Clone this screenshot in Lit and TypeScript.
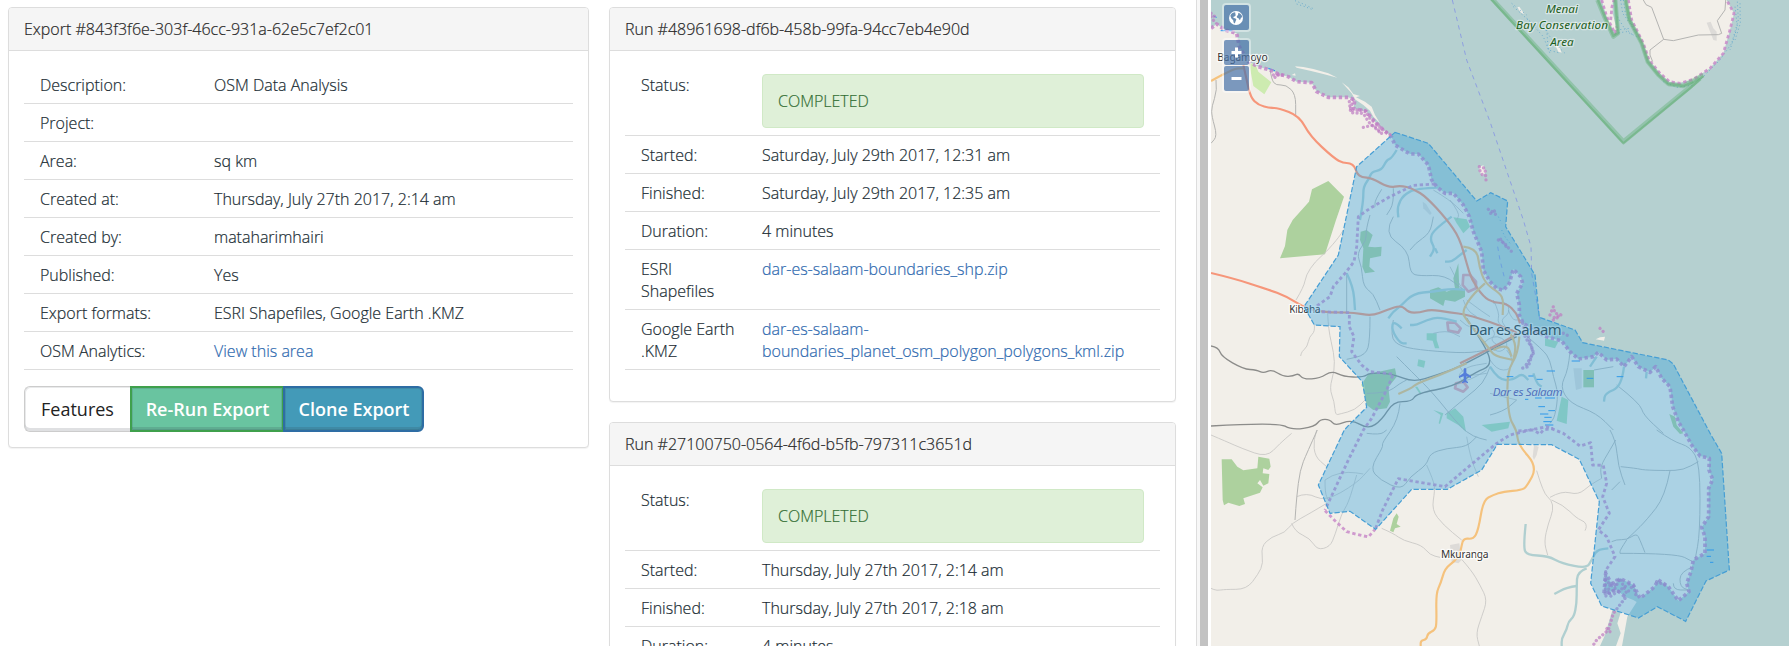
import { LitElement, html, svg, css } from "lit";
import { customElement, property } from "lit/decorators.js";

type Row = { label: string; value?: string; href?: boolean; status?: boolean };

@customElement("info-panel")
export class InfoPanel extends LitElement {
  @property() heading = "";
  @property({ attribute: false }) rows: Row[] = [];
  @property({ type: Number }) labelWidth = 174;
  static styles = css`
    :host { display: block; background: #fff; border: 1px solid #ddd; border-radius: 4px; box-shadow: 0 1px 1px rgba(0,0,0,.05); box-sizing: border-box; }
    .head { height: 43px; box-sizing: border-box; border-bottom: 1px solid #ddd; background: #f5f5f5; color: #222; padding: 10px 15px 0; border-radius: 3px 3px 0 0; line-height: 22px; -webkit-text-stroke: .2px #333; }
    .body { padding: 15px; }
    .row { display: grid; border-bottom: 1px solid #ddd; padding: 8px 16px 7px; line-height: 22px; color: #14262e; -webkit-text-stroke: .2px #2a3a40; }
    .label { padding-right: 16px; }
    a { color: #2563ac; text-decoration: none; -webkit-text-stroke-color: #3d73b4; }
    .alert { height: 54px; box-sizing: border-box; border: 1px solid #d0e9c6; border-radius: 4px; background: #dff0d8; color: #2f6a30; padding: 15px 15px 0; -webkit-text-stroke-color: #3c763d; }
  `;
  render() {
    return html`
      <div class="head">${this.heading}</div>
      <div class="body">
        ${this.rows.map((r) => html`<div class="row" style="grid-template-columns:${this.labelWidth}px 1fr">
          <div class="label">${r.label}</div>
          ${r.status ? html`<div class="alert">${r.value}</div>` : html`<div>${r.href ? html`<a>${r.value}</a>` : r.value}</div>`}
        </div>`)}
        <slot></slot>
      </div>`;
  }
}

const COAST = "33,85 50,72 75,90 110,100 118,140 145,185 175,200 210,210 235,222 265,230 290,245 335,248 350,275 385,292 445,292 465,300 460,325 500,335 515,355 545,385 575,412 585,435 630,462 655,462 685,495 695,540 710,560 735,580 760,580 790,615 808,650 820,695 845,755 850,810 870,845 890,865 910,871 928,850 940,808 962,830 968,850 950,880 958,915 958,945 970,970 1000,990 1040,1010 1085,1023 1110,1055 1135,1077 1180,1070 1195,1057 1220,1080 1250,1077 1272,1100 1295,1070 1315,1100 1350,1117 1367,1100 1385,1135 1410,1160 1418,1220 1435,1265 1450,1290 1475,1335 1500,1368 1528,1375 1527,1410 1538,1438 1526,1465 1526,1550 1505,1582 1515,1610 1515,1660 1480,1680 1473,1715 1460,1750 1467,1775 1435,1802 1405,1760 1375,1740 1362,1762 1320,1795 1300,1755 1260,1735 1240,1760 1217,1720 1212,1780 1250,1770 1275,1790";
const AREA = "585,397 685,430 830,603 872,578 923,603 917,680 1005,825 1018,952 1125,990 1148,1028 1405,1080 1420,1092 1533,1305 1565,1360 1588,1710 1518,1743 1457,1864 1372,1820 1315,1854 1205,1818 1172,1750 1198,1505 1138,1378 1055,1334 892,1333 845,1410 742,1468 635,1468 527,1588 450,1534 390,1540 355,1455 433,1290 445,1277 500,1222 487,1145 418,1070 420,980 343,975 312,920 415,765 440,645 470,500";

/** Turns a point list into a path that bends through the middle of each segment. */
const smooth = (points: string): string => {
  const p = points.split(" ").map((s) => s.split(",").map(Number));
  let d = `M${p[0][0]} ${p[0][1]}`;
  for (let i = 1; i < p.length - 1; i++) {
    d += `Q${p[i][0]} ${p[i][1]} ${(p[i][0] + p[i + 1][0]) / 2} ${(p[i][1] + p[i + 1][1]) / 2}`;
  }
  const last = p[p.length - 1];
  return `${d}L${last[0]} ${last[1]}`;
};
const curves = (cls: string, list: string[]) => list.map((p) => svg`<path class="line ${cls}" d=${smooth(p)}></path>`);
const lines = (cls: string, list: string[]) => list.map((p) => svg`<polyline class="line ${cls}" points=${p}></polyline>`);
const fills = (cls: string, list: string[]) => list.map((p) => svg`<polygon class=${cls} points=${p}></polygon>`);

@customElement("export-map")
export class ExportMap extends LitElement {
  static styles = css`
    :host { display: block; position: relative; overflow: hidden; font-weight: 400; }
    .map { display: block; width: 578px; height: 646px; }
    .line { fill: none; stroke-linejoin: round; }
    .sea { fill: #b5d0d0; }
    .land { fill: #f2efe9; }
    .wood { fill: #add19e; }
    .park { fill: #cdebb0; }
    .green { fill: #9bd8ac; opacity: .8; }
    .urban { fill: #dddbd8; }
    .base { fill: #f3dcdc; fill-opacity: .6; stroke: #e48e9d; stroke-width: 8; stroke-opacity: .75; stroke-linejoin: round; }
    .minor { stroke: #c8c7c5; stroke-width: 2.6; }
    .grey { stroke: #b4b4b2; stroke-width: 3; }
    .inner { stroke: #b0b3b3; stroke-width: 2.6; }
    .street { stroke: #b9b9b9; stroke-width: 2.2; }
    .rail { stroke: #8c8c8a; stroke-width: 4; }
    .trunk { stroke: #f6967a; stroke-width: 6.5; }
    .primary { stroke: #f5c27d; stroke-width: 6.5; }
    .river { stroke: #b0cfd0; stroke-width: 7; }
    .admin { stroke: #c98bc9; stroke-width: 8.5; stroke-dasharray: 10 8; opacity: .85; }
    .coast { stroke: #c180c6; stroke-width: 11; stroke-dasharray: 10 8; opacity: .8; }
    .dense { stroke: #bd7cc2; stroke-width: 10; stroke-dasharray: .1 13; stroke-linecap: round; opacity: .7; }
    .reserve { stroke: #5fae72; stroke-width: 13; opacity: .4; }
    .reserve-edge { stroke: #5fae72; stroke-width: 7; opacity: .5; }
    .ferry { stroke: #8e9fe0; stroke-width: 3; stroke-dasharray: 13 13; }
    .marsh { stroke: #2a93f0; stroke-width: 3; }
    .reef { stroke: #5aa2cc; stroke-width: 3; stroke-dasharray: 3 8; opacity: .8; }
    .area { fill: rgba(55,163,222,.38); stroke: #469ed4; stroke-width: 3.6; stroke-dasharray: 16 6; }
    text { font-family: "Noto Sans", sans-serif; fill: #333; paint-order: stroke; stroke: rgba(255,255,255,.75); stroke-width: 8px; stroke-linejoin: round; }
    .menai { fill: #1d601d; font-style: italic; text-anchor: middle; font-size: 35px; stroke: rgba(255,255,255,.45); }
    .town { font-size: 31px; }
    .city { font-size: 44.5px; stroke: rgba(255,255,255,.45); }
    .region { font-size: 35px; font-style: italic; fill: #6652a5; stroke-width: 4px; stroke: rgba(255,255,255,.4); }
    .controls { position: absolute; left: 11px; top: 3px; display: flex; flex-direction: column; gap: 6px; }
    .group { display: flex; flex-direction: column; gap: 1px; padding: 2px; background: rgba(255,255,255,.4); border-radius: 4px; }
    .btn { display: block; width: 25px; height: 25px; background: rgba(0,60,136,.5); border-radius: 2px; }
    .btn svg { display: block; }
  `;
  render() {
    return html`
      <svg class="map" viewBox="33 0 1734 1938" preserveAspectRatio="none">
        <rect class="land" x="33" y="0" width="1734" height="1938"></rect>
        <polygon class="sea" points="33,0 ${COAST} 1300,1800 1310,1806 1282,1850 1266,1938 1767,1938 1767,0"></polygon>
        <polygon class="sea" points="1238,1828 1262,1838 1252,1870 1262,1900 1248,1938 1200,1938 1215,1905"></polygon>
        ${fills("land", [
          "1280,0 1295,60 1330,130 1347,180 1380,220 1408,245 1440,248 1480,238 1530,205 1570,160 1590,90 1602,40 1580,0",
          "1205,0 1220,50 1245,100 1252,95 1238,40 1238,0",
          "285,199 310,201 340,207 385,220 412,233 370,222 330,212 290,203",
          "425,247 445,262 460,282 480,288 468,292 495,305 515,320 525,345 540,370 520,350 510,332 490,315 465,298 455,280",
          "950,22 958,20 973,42 965,40", "1063,130 1078,140 1085,158 1075,155", "1187,1018 1200,1012 1215,1010 1212,1022",
          "838,500 850,496 858,515 848,528 838,515", "275,225 285,220 287,227",
        ])}
        ${lines("reef", ["285,2 310,12 338,25", "290,12 315,20 335,28", "935,10 960,30 980,45", "940,20 985,60 1030,110 1050,160", "980,55 1010,80", "1030,80 1060,125 1095,160", "1040,90 1045,150 1075,158", "1245,100 1280,95 1310,110", "1250,90 1290,85", "1262,0 1268,40 1290,70 1310,100", "1270,0 1276,40 1296,75", "1252,50 1270,80 1298,105", "1612,5 1615,60 1595,130 1560,180 1500,240", "1605,20 1612,80 1590,150", "1620,10 1621,70 1605,120", "1390,245 1430,262 1480,255", "905,690 915,710 930,730", "895,650 905,670"])}
        ${fills("wood", [
          "278,660 327,605 336,568 385,543 432,590 408,660 375,763 240,775 255,738 262,690",
          "65,1378 95,1378 112,1400 130,1411 172,1405 175,1370 208,1376 212,1400 205,1410 190,1405 188,1420 208,1422 205,1450 190,1457 180,1440 172,1450 188,1462 180,1478 130,1495 135,1512 118,1518 85,1508 72,1516 68,1500",
          "590,1540 580,1555 570,1592 580,1597 585,1585 602,1580 590,1572 596,1550",
          "487,1150 505,1122 585,1105 590,1130 565,1162 570,1205 560,1225 520,1230 500,1215",
          "482,695 500,690 518,705 505,740 525,742 545,740 543,768 510,775 508,800 525,815 495,820 487,800 490,745 480,720",
          "690,870 715,862 740,875 765,865 760,835 775,790 778,870 795,870 795,890 765,905 735,900 730,918 690,895",
          "1150,1110 1182,1110 1182,1162 1150,1162",
          "1408,1242 1425,1250 1430,1275 1450,1300 1440,1302 1420,1280",
        ])}
        ${fills("park", ["148,192 165,190 175,215 214,247 193,283 160,258", "483,1155 490,1142 496,1172"])}
        ${fills("green", ["680,1000 710,1000 710,1020 718,1045 705,1045 698,1022 680,1020", "655,1078 676,1083 672,1103 652,1098", "740,1240 765,1225 790,1250 798,1295 775,1275 740,1255", "845,1275 890,1270 930,1265 925,1285 875,1295", "1085,1190 1105,1200 1100,1272 1070,1262", "760,652 800,658 810,680 790,700 770,670", "1035,1015 1075,1025 1065,1045 1035,1037", "645,1160 652,1160 664,1180 658,1180", "700,1230 730,1240 720,1272 716,1270 722,1245"])}
        ${fills("urban", ["750,1635 778,1630 782,1660 785,1680 775,1690 755,1685", "1520,68 1532,65 1540,85 1550,95 1550,122 1540,120", "1120,1105 1145,1105 1145,1165 1128,1170", "1002,1336 1016,1340 1010,1365 1002,1380 998,1370", "668,605 678,612 695,640 690,645 670,625"])}
        ${fills("base", ["790,825 810,825 828,845 828,865 805,875 788,855", "742,968 765,968 782,985 775,998 745,992", "768,1150 790,1145 803,1162 790,1175 765,1165"])}
        ${curves("minor", [
          "288,900 312,860 318,825 345,785 380,755 418,710 430,690", "343,975 345,995 328,1010 322,1040 305,1055 302,1068",
          "383,940 385,990 402,1060 404,1110 388,1165 403,1205 406,1245 420,1242 465,1230 495,1200",
          "33,1305 80,1325 125,1345 200,1372 240,1330 275,1300", "350,1290 340,1320 345,1370 380,1400", "380,1510 330,1540 275,1570 255,1598 215,1610 183,1640 190,1690 175,1722 140,1768 75,1768 50,1772 33,1765",
          "290,1490 320,1477 375,1505 470,1450 510,1405", "275,1570 285,1595 330,1615 352,1650 390,1640 405,1605 425,1540 445,1510 470,1425", "375,1440 395,1425 445,1415 490,1422", "375,1440 375,1480 385,1500", "545,1585 580,1600 610,1622 665,1635 690,1665 720,1672",
          "680,1395 700,1440 705,1470 695,1530 730,1575 785,1620", "785,1678 815,1712 840,1755 862,1800 845,1850 828,1900 838,1938", "800,1310 810,1370 835,1430",
          "1010,1412 1030,1480 1055,1500 1060,1530 1045,1570 1032,1625 1043,1665", "1050,1492 1085,1472 1135,1485 1170,1455 1205,1435", "1055,1500 1090,1515 1130,1555 1155,1565 1160,1580 1155,1592",
        ])}
        ${curves("grey", [
          "210,208 215,240 228,256 258,254 287,282 287,345", "48,240 52,270 35,320 35,348 52,408 33,430", "352,1290 320,1360 300,1410 290,1490 285,1560",
        ])}
        ${lines("grey", ["1330,0 1338,14 1355,22 1391,118 1420,122 1495,105 1555,104 1565,100 1552,62 1575,30 1577,0", "1391,118 1350,150 1350,165 1358,185"])}
        ${curves("inner", [
          "545,568 525,600 525,620", "510,645 497,690 500,720 470,760 485,800 490,860 520,880 540,930", "580,650 550,700 625,750 630,820 660,828 735,825 790,870", "630,750 645,730 690,700 700,650", "580,565 582,610 560,645",
          "440,820 440,940", "510,950 510,1020 498,1065 440,1078", "580,960 570,1010 600,1040 680,1052 800,1060 860,1050", "590,1070 640,1120 700,1180 780,1280 820,1310 860,1320", "500,1180 560,1180 600,1150 620,1140", "735,1245 800,1190 850,1150 870,1100", "600,1210 595,1260 545,1330 550,1340 510,1405 540,1440 605,1470 630,1430 680,1395 690,1360 740,1345 800,1340 830,1310", "500,1300 540,1305 560,1290", "870,1245 910,1235 950,1200",
          "970,1000 1030,1050 1050,1080 1060,1130 1075,1180 1065,1250 1050,1270", "1110,1055 1105,1110 1080,1160 1110,1210 1190,1240 1240,1290", "1182,1110 1240,1100", "1250,1155 1320,1210 1330,1245 1390,1300",
          "1230,1290 1247,1320 1255,1400 1275,1455", "1247,1320 1230,1350 1200,1400 1205,1435", "1262,1400 1310,1405 1330,1410 1400,1412 1450,1410 1495,1385", "1370,1290 1420,1325 1470,1340 1500,1390 1500,1600 1485,1680", "1410,1412 1395,1490 1340,1560 1300,1600 1280,1618", "1235,1625 1250,1618 1280,1620 1310,1600 1320,1620 1335,1658", "1280,1620 1260,1650 1260,1660", "1260,1660 1430,1660 1478,1685", "1260,1445 1235,1470", "1480,1700 1440,1715 1440,1760 1465,1770", "1420,1750 1420,1770 1465,1770",
        ])}
        ${curves("street", [
          "880,900 900,940 890,970 940,1000", "880,910 920,900 930,940 900,960 925,990", "870,1080 890,1110 930,1110 940,1080 920,1050", "850,1030 880,1000 930,1030 900,1060 870,1040", "750,600 780,640 770,660", "860,1110 800,1150 770,1130 800,1100 860,1090", "800,900 840,930 870,950", "750,800 770,840 790,870", "790,900 800,930 830,950", "925,930 935,960 960,960", "870,1180 910,1190 950,1200", "700,570 750,600 790,640", "700,1000 740,990 780,1010", "780,960 800,980 830,985 850,1000", "870,980 890,1000 870,1020 900,1040", "780,1100 790,1130 860,1120",
        ])}
        ${curves("river", ["977,1572 970,1640 980,1665 1045,1668 1085,1690 1160,1705 1175,1680 1190,1650 1225,1645", "1160,1705 1132,1715 1130,1760 1130,1810 1122,1850 1105,1865 1100,1890 1085,1915 1085,1938", "1130,1758 1100,1762 1063,1782"])}
        ${curves("river", ["590,450 575,475 560,480 545,510 515,515 508,535 490,560 490,600 480,660", "715,563 650,565 610,585 592,620 595,652", "755,650 700,690 690,720 705,745 690,770", "705,745 712,760", "800,750 780,765 755,785 735,785", "795,870 760,865 700,875 640,880 600,920 580,935 565,955", "770,965 720,950 680,960 650,975 630,975", "440,820 460,860 465,930", "605,985 580,960 575,990 600,1030 620,1030", "1272,1100 1265,1160 1215,1180 1212,1205", "1190,1070 1170,1100", "1000,1120 1010,1150 1025,1160", "870,1100 895,1140 940,1140 965,1120 985,1140", "1340,1115 1338,1135"])}
        ${curves("rail", ["33,1038 55,1042 65,1070 130,1107 170,1110 190,1120 215,1108 250,1130 280,1128 295,1120 310,1138 360,1135 395,1112 430,1130 490,1132 510,1118 580,1122 640,1147 710,1125 780,1100 900,1035 950,1010", "33,1278 235,1267 275,1290 345,1280 360,1258 390,1258 405,1278 455,1258 505,1288 545,1260 580,1205 635,1205 650,1180 760,1160 830,1115 870,1100 868,1060 800,955"])}
        ${curves("trunk", ["130,195 140,240 152,292 175,315 210,324 235,324 298,348 330,408 402,475 430,489 450,489 465,500 470,520 485,532 515,534 568,564 600,556 640,566 680,592 740,658 778,712 800,790 815,840 850,890 880,908 920,910 950,940 960,970", "33,819 100,835 200,867 262,890 325,930 400,938 460,937 515,948 560,930 605,915 625,938 660,938 690,928 750,937 800,944 870,965 930,990 960,1000 860,1050 780,1090"])}
        ${curves("primary", ["33,243 100,205 130,205", "790,740 830,745 838,800 855,850 900,880 910,900 908,945", "855,850 820,880 785,935 800,960 870,1050 885,1068 940,1080", "595,1182 635,1165 650,1150 720,1125 800,1090", "958,1010 955,1060 920,1115 925,1250 950,1290 955,1335 1012,1400 980,1460 965,1470 910,1475 880,1485 850,1500 835,1590 820,1618 788,1614 783,1655 765,1683 735,1705 722,1750 708,1780 710,1870 705,1890 683,1900 680,1918 662,1922 662,1938", "930,1000 950,1030 940,1080", "880,1050 920,1030 935,1070"])}
        ${lines("ferry", ["757,0 800,180 870,365 970,660 993,740 995,820 1020,960", "893,740 900,780 915,840"])}
        ${lines("marsh", ["62,92 98,92", "1000,985 985,990", "1040,1113 1065,1113", "985,1128 1000,1128", "1010,1138 1028,1138", "1005,1194 1025,1194", "1035,1194 1065,1194", "1015,1220 1035,1220", "1045,1232 1065,1232", "1020,1242 1045,1242", "1033,1252 1055,1252", "1030,1265 1055,1265", "1035,1275 1060,1275", "1250,1130 1270,1130", "1115,1083 1140,1083", "1520,1650 1542,1650", "1520,1669 1533,1669", "1530,1687 1540,1687", "975,1198 985,1198", "1160,1135 1180,1135", "920,1130 940,1130", "205,205 225,212", "40,48 50,52"])}
        ${lines("coast", [COAST])}
        ${lines("admin", ["705,552 640,556 570,590 510,625 475,650 470,740 462,785 435,820 400,860 390,890 350,918 360,935 448,938 448,980 462,1010 455,1055 485,1095 510,1115 580,1122 560,1170 515,1255 490,1290 445,1380 375,1530", "527,1585 548,1530 595,1436 735,1460 800,1405 890,1330 930,1305 990,1290 1040,1280 1090,1300 1140,1338 1172,1328 1178,1395 1210,1396 1220,1450 1208,1490 1228,1540 1195,1590 1220,1610 1245,1670 1218,1710", "1285,0 1295,60 1330,130 1347,180 1380,220 1408,245 1440,250 1480,238 1530,205 1570,160 1590,90 1602,40 1580,0", "1205,0 1220,50 1245,100 1250,80", "1232,60 1236,20 1242,0", "955,1293 1000,1290 1020,1302 1030,1290 1060,1285"])}
        ${lines("admin", ["375,1532 405,1562 440,1595 470,1603 505,1611 525,1588"])}
        ${lines("dense", ["33,40 50,55", "33,50 45,68", "220,225 250,225", "225,232 245,218", "460,300 450,330 495,330 510,355 550,390 572,405", "448,305 452,338 490,340 505,365 545,402", "490,382 520,375 545,400", "838,500 855,505 858,540", "840,512 850,530", "968,970 975,1010 1000,1050 985,1100 965,1105", "985,1010 1000,1060 975,1100", "1050,945 1060,920 1065,940 1085,945 1055,955", "1060,960 1080,948", "1200,985 1215,1000", "1090,1000 1110,1010", "1217,1715 1215,1790 1240,1770", "1215,1740 1245,1765 1260,1735 1280,1780 1300,1755 1310,1795", "1250,1740 1225,1760 1230,1790 1290,1750", "1370,1745 1395,1755", "1275,1795 1240,1840 1225,1890 1190,1920 1180,1935", "1230,1895 1215,1880", "895,720 912,728 935,755", "902,718 920,742", "872,640 885,632", "865,628 885,640 890,650"])}
        ${lines("reserve", ["875,-5 1270,424 1500,236", "1277,0 1288,60 1325,130 1343,185 1375,225 1405,252 1450,258 1510,225", "1192,0 1215,55 1240,110 1254,100 1246,0"])}
        ${lines("reserve-edge", ["873,-3 1270,430 1470,265 1510,228", "1277,0 1288,60 1325,130 1343,185 1375,225 1405,252 1450,258 1480,246", "1194,0 1216,55 1240,108 1254,100 1246,0"])}
        <path fill="#6666d8" d="M795 1103 l4 4 v12 l14 10 v5 l-14 -5 v13 l5 4 v4 l-9 -3 l-9 3 v-4 l5 -4 v-13 l-14 5 v-5 l14 -10 v-12 z"></path>
        <text class="menai" x="1086" y="38">Menai</text>
        <text class="menai" x="1086" y="88" textLength="276">Bay Conservation</text>
        <text class="menai" x="1086" y="138">Area</text>
        <text class="town" x="52" y="183" textLength="151">Bagamoyo</text>
        <text class="town" x="268" y="939" textLength="94">Kibaha</text>
        <text class="town" x="723" y="1674" textLength="143">Mkuranga</text>
        <text class="city" x="807" y="1006" textLength="278">Dar es Salaam</text>
        <text class="region" x="878" y="1187" textLength="210">Dar es Salaam</text>
        <polygon class="area" points=${AREA}></polygon>
      </svg>
      <div class="controls">
        <div class="group"><span class="btn"><svg width="25" height="25" viewBox="0 0 25 25"><circle cx="12" cy="13" r="7" fill="#fff"></circle><path fill="#688db2" d="M6.4 10.4C7.2 8.6 8.6 7.6 10.4 7.2l1.4.8-1 1 1.2.8-1 1.4-1.4.6-.2 1.2 1.8.2 1.2 1.4-.8 1.6-.8 2.2-1.2-.8-.4-2.4-1.8-1.8-.8-1.8zM14.4 7.8l2 1 1.4 1.8.4 1.8-1.2.2-.6 1.8-1.2.4-.8-1.8-1.4-.2-.2-1.6 1.2-1.2z"></path></svg></span></div>
        <div class="group">
          <span class="btn"><svg width="25" height="25"><path d="M7.5 12.5h10M12.5 7.5v10" stroke="#fff" stroke-width="3"></path></svg></span>
          <span class="btn"><svg width="25" height="25"><path d="M7.5 12.5h10" stroke="#fff" stroke-width="3"></path></svg></span>
        </div>
      </div>`;
  }
}

const EXPORT: Row[] = [
  { label: "Description:", value: "OSM Data Analysis" },
  { label: "Project:", value: "" },
  { label: "Area:", value: "sq km" },
  { label: "Created at:", value: "Thursday, July 27th 2017, 2:14 am" },
  { label: "Created by:", value: "mataharimhairi" },
  { label: "Published:", value: "Yes" },
  { label: "Export formats:", value: "ESRI Shapefiles, Google Earth .KMZ" },
  { label: "OSM Analytics:", value: "View this area", href: true },
];
const run = (started: string, finished: string): Row[] => [
  { label: "Status:", value: "COMPLETED", status: true },
  { label: "Started:", value: started },
  { label: "Finished:", value: finished },
  { label: "Duration:", value: "4 minutes" },
  { label: "ESRI Shapefiles", value: "dar-es-salaam-boundaries_shp.zip", href: true },
  { label: "Google Earth .KMZ", value: "dar-es-salaam-boundaries_planet_osm_polygon_polygons_kml.zip", href: true },
];

@customElement("app-root")
export class AppRoot extends LitElement {
  static styles = css`
    :host { display: flex; height: 646px; overflow: hidden; background: #fff; font: 300 16px/22px "Open Sans", sans-serif; }
    .main { width: 1196px; flex: none; box-sizing: border-box; padding: 7px 20.5px 0 8px; display: grid; grid-template-columns: 581px 566.5px; justify-content: space-between; align-items: start; }
    .runs { display: flex; flex-direction: column; gap: 20px; }
    .run { height: 395px; }
    .export { height: 441px; }
    .split { flex: none; width: 3px; border-left: 1px solid #ddd; background: #f7f7f7; border-right: 8px solid #c2c2c2; margin-right: 3px; }
    .buttons { display: flex; margin-top: 16px; }
    .b { height: 46px; box-sizing: border-box; border: 2px solid #ccc; box-shadow: inset 0 0 0 1px rgba(40,50,60,.13), inset 0 -3px 0 rgba(40,50,60,.15); font-weight: 600; font-size: 18px; line-height: 43px; text-align: center; color: #fff; }
    .features { width: 106px; color: #222; font-weight: 400; border-radius: 6px 0 0 6px; border-width: 1px 0 1px 1px; border-color: #ccc; line-height: 45px; box-shadow: inset 1px 1px 0 rgba(40,50,60,.1), inset 0 -3px 0 rgba(40,50,60,.15); }
    .rerun { width: 153px; background: #69c4a0; border-color: #3fa04c; border-right-width: 1px; padding-left: 1px; }
    .clone { width: 141px; background: #439ab8; border-color: #2e6da4; border-radius: 0 6px 6px 0; padding-left: 1px; }
    .map { flex: none; width: 578px; }
  `;
  render() {
    return html`
      <div class="main">
        <info-panel class="export" heading="Export #843f3f6e-303f-46cc-931a-62e5c7ef2c01" .rows=${EXPORT} .labelWidth=${174}>
          <div class="buttons"><div class="b features">Features</div><div class="b rerun">Re-Run Export</div><div class="b clone">Clone Export</div></div>
        </info-panel>
        <div class="runs">
          <info-panel class="run" heading="Run #48961698-df6b-458b-99fa-94cc7eb4e90d" .rows=${run("Saturday, July 29th 2017, 12:31 am", "Saturday, July 29th 2017, 12:35 am")} .labelWidth=${121}></info-panel>
          <info-panel class="run" heading="Run #27100750-0564-4f6d-b5fb-797311c3651d" .rows=${run("Thursday, July 27th 2017, 2:14 am", "Thursday, July 27th 2017, 2:18 am")} .labelWidth=${121}></info-panel>
        </div>
      </div>
      <div class="split"></div>
      <export-map class="map"></export-map>`;
  }
}
